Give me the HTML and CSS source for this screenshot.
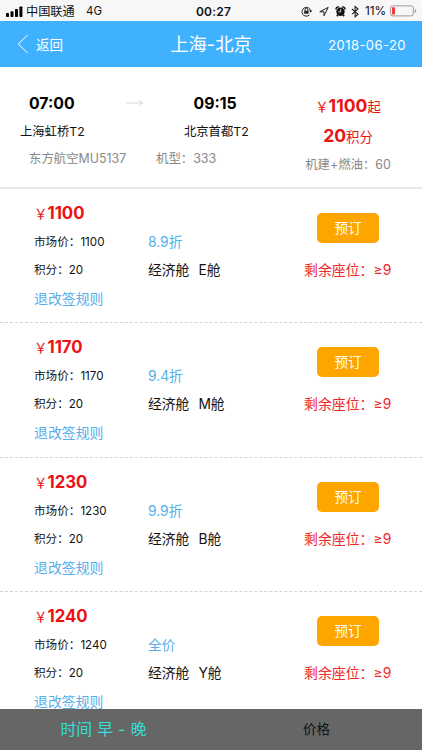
FILE: index.html
```html
<!DOCTYPE html>
<html lang="zh-CN">
<head>
<meta charset="utf-8">
<title>上海-北京</title>
<link rel="stylesheet" href="styles.css">
</head>
<body>
<div class="screen">
  <div class="status">
    <svg class="signal" width="17" height="11" viewBox="0 0 17 11"><rect x="0" y="7" width="3" height="4" rx=".8"/><rect x="4.5" y="5.3" width="3" height="5.7" rx=".8"/><rect x="9" y="3" width="3" height="8" rx=".8"/><rect x="13.4" y="0.5" width="3" height="10.5" rx=".8"/></svg>
    <span class="carrier">中国联通</span><span class="net">4G</span>
    <span class="clock">00:27</span>
    <svg class="indicators" width="60" height="13" viewBox="0 0 60 13">
      <g fill="none" stroke="#222" stroke-width="1"><path d="M8.5 9.9A4.4 4.4 0 1 1 9.7 5.8"/><path d="M4 6V4.600a1.400 1.400 0 0 1 2.800 0V6"/></g>
      <path d="M3.200 5.700h4.400v3H3.200zM8 5.500h3.300L9.700 7.800z" fill="#222"/>
      <path d="M18.800 6.800 27.200 2.400 23 10.800V6.800Z" fill="none" stroke="#222" stroke-width="1"/>
      <circle cx="39.500" cy="6.700" r="4.200" fill="#111"/><path d="M35.200 4.600a2 2 0 0 1 2.600-2.500M41.200 2.100a2 2 0 0 1 2.600 2.500M36.800 9.800l-1 1.400M42.200 9.800l1 1.400" stroke="#111" stroke-width="1.500" fill="none"/><path d="M39.700 4.200v2.700h-2.400" stroke="#eee" fill="none" stroke-width=".9"/>
      <path d="M51 4 57 9.200 54.100 11.700V1.500L57 4 51 9.200" fill="none" stroke="#222" stroke-width="1.100"/>
    </svg>
    <span class="percent">11%</span>
    <svg class="battery" width="27" height="12" viewBox="0 0 27 12"><rect x=".5" y=".9" width="22.800" height="10" rx="2.200" fill="none" stroke="#999"/><rect x="2" y="2.300" width="3" height="7.200" rx=".6" fill="#f5383c"/><path d="M24.800 4v4c1.100-.5 1.400-1.200 1.400-2s-.3-1.500-1.400-2Z" fill="#999"/></svg>
  </div>

  <header class="nav">
    <div class="back"><svg width="12" height="20" viewBox="0 0 12 20"><path d="M10.700 1 1.200 10l9.500 9" fill="none" stroke="#fff" stroke-width="1"/></svg><span>返回</span></div>
    <h1>上海-北京</h1>
    <div class="date">2018-06-20</div>
  </header>

  <section class="summary">
    <div class="trip">
      <div class="times"><b>07:00</b><svg width="18" height="8" viewBox="0 0 18 8"><path d="M0 4h16.500M12.500 1l4 3-4 3" fill="none" stroke="#d8d8d8" stroke-width="1"/></svg><b class="arrive">09:15</b></div>
      <div class="airports"><span>上海虹桥T2</span><span>北京首都T2</span></div>
      <div class="flight"><span>东方航空MU5137</span><span>机型：333</span></div>
    </div>
    <div class="fare">
      <div class="from">￥<b>1100</b>起</div>
      <div class="points"><b>20</b>积分</div>
      <div class="tax">机建+燃油：60</div>
    </div>
  </section>

  <main class="list">
    <article class="cabin">
      <div class="col"><div class="price">￥<b>1100</b></div><div class="small">市场价：<i>1100</i></div><div class="small">积分：<i>20</i></div><a class="rule">退改签规则</a></div>
      <div class="col mid"><div class="discount">8.9折</div><div class="class"><span>经济舱</span><span>E舱</span></div></div>
      <div class="col end"><button>预订</button><div class="seats">剩余座位：≥9</div></div>
    </article>
    <article class="cabin">
      <div class="col"><div class="price">￥<b>1170</b></div><div class="small">市场价：<i>1170</i></div><div class="small">积分：<i>20</i></div><a class="rule">退改签规则</a></div>
      <div class="col mid"><div class="discount">9.4折</div><div class="class"><span>经济舱</span><span>M舱</span></div></div>
      <div class="col end"><button>预订</button><div class="seats">剩余座位：≥9</div></div>
    </article>
    <article class="cabin">
      <div class="col"><div class="price">￥<b>1230</b></div><div class="small">市场价：<i>1230</i></div><div class="small">积分：<i>20</i></div><a class="rule">退改签规则</a></div>
      <div class="col mid"><div class="discount">9.9折</div><div class="class"><span>经济舱</span><span>B舱</span></div></div>
      <div class="col end"><button>预订</button><div class="seats">剩余座位：≥9</div></div>
    </article>
    <article class="cabin">
      <div class="col"><div class="price">￥<b>1240</b></div><div class="small">市场价：<i>1240</i></div><div class="small">积分：<i>20</i></div><a class="rule">退改签规则</a></div>
      <div class="col mid"><div class="discount">全价</div><div class="class"><span>经济舱</span><span>Y舱</span></div></div>
      <div class="col end"><button>预订</button><div class="seats">剩余座位：≥9</div></div>
    </article>
  </main>

  <footer class="sort"><div class="active">时间 早 - 晚</div><div>价格</div></footer>
</div>
</body>
</html>
```
FILE: styles.css
```css
* { box-sizing: border-box; }
body { margin: 0; background: #fff; color: #111; font-family: Inter, "Noto Sans CJK SC", sans-serif; }
.screen { width: 422px; height: 750px; display: flex; flex-direction: column; overflow: hidden; }
i { font-style: normal; }
svg { display: block; flex: none; }
span, div, b { white-space: nowrap; }

.status { height: 21px; flex: none; background: #f7f7f7; display: grid; grid-template-columns: 20px 60px 110px 105px 64px 25px 27px; align-items: center; padding-left: 6px; font-size: 11.5px; line-height: 21px; }
.carrier { font-size: 12.200px; }
.net { font-size: 11.500px; padding-top: 1px; }
.clock { font-size: 12px; font-weight: 600; letter-spacing: .2px; }
.percent { font-size: 11.800px; letter-spacing: -.1px; padding-top: 1px; }

.nav { height: 46px; flex: none; background: #40b1ff; color: #fff; display: grid; grid-template-columns: 1fr auto 1fr; align-items: center; padding: 0 16px 1px 17px; }
.back { display: flex; align-items: center; gap: 7px; font-size: 13.500px; }
.nav h1 { margin: 0 1px 0 0; font-size: 18.300px; font-weight: 400; line-height: 26px; }
.date { text-align: right; font-size: 13px; letter-spacing: .45px; padding-top: 2px; }

.summary { height: 122px; flex: none; border-bottom: 2px solid #e8e8e8; display: flex; }
.trip { width: 290px; padding-top: 25px; }
.times { display: flex; align-items: center; height: 22px; padding-left: 29px; font-size: 15.800px; color: #000; }
.times b { width: 97px; }
.times svg { margin-right: 50px; }
.airports { display: grid; grid-template-columns: 164px auto; padding-left: 20px; margin-top: 8px; height: 20px; line-height: 20px; font-size: 12.300px; }
.flight { display: grid; grid-template-columns: 127px auto; padding-left: 29px; margin-top: 7px; height: 20px; line-height: 20px; font-size: 12.400px; color: #888; }
.fare { width: 116px; padding-top: 27px; text-align: center; color: #ec1112; }
.from, .points { height: 24px; line-height: 24px; font-size: 13.400px; }
.points { margin-top: 6px; }
.fare b { font-size: 17.600px; }
.tax { margin-top: 7px; line-height: 20px; font-size: 12.400px; color: #888; }

.list { flex: 1; min-height: 0; overflow: hidden; }
.cabin { height: 134.400px; display: grid; grid-template-columns: 114px 156px 88px; padding-left: 34px; border-bottom: 1px dashed #d4d4d4; }
.price { margin-top: 12px; height: 24px; line-height: 24px; font-size: 13.400px; color: #ec1112; }
.price b { font-size: 16.800px; }
.small { height: 20px; margin-top: 7px; line-height: 20px; font-size: 11.600px; }
.small + .small { margin-top: 8px; }
.rule { display: block; margin-top: 8px; line-height: 22px; font-size: 13.900px; color: #54afea; }
.mid { padding-top: 42px; font-size: 13.800px; }
.discount { height: 22px; line-height: 22px; color: #54afea; }
.class { display: flex; gap: 9px; height: 22px; line-height: 22px; margin-top: 6px; }
.end { padding-top: 24px; font-size: 13.900px; }
button { display: block; width: 62px; height: 30px; margin: 0 0 0 13px; padding: 0; border: 0; border-radius: 5px; background: #ffa500; color: #fff; font: 13.500px/30px Inter, "Noto Sans CJK SC", sans-serif; }
.seats { margin-top: 16px; line-height: 22px; color: #f0282a; }

.sort { height: 41px; flex: none; display: grid; grid-template-columns: 1fr 1fr; background: #666; color: #111; text-align: center; line-height: 40px; font-size: 13.500px; }
.sort .active { color: #35ded6; font-size: 15.800px; word-spacing: .7px; padding: 1px 4px 0 0; }
```
